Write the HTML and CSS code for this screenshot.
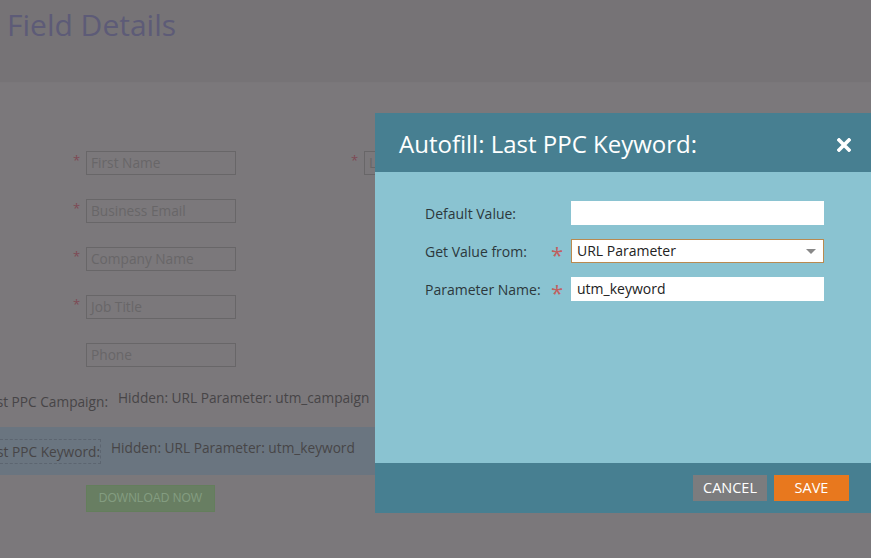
FILE: index.html
```html
<!DOCTYPE html>
<html lang="en">

<head>
    <meta charset="UTF-8">
    <title>Field Details</title>
    <link rel="stylesheet" href="styles.css">
</head>

<body>
    <div class="page">
        <div class="page-head">
            <h1>Field Details</h1>
        </div>

        <div class="form">
            <div class="row">
                <div class="col">
                    <span class="req">*</span>
                    <div class="box">First Name</div>
                </div>
                <div class="col col2">
                    <span class="req">*</span>
                    <div class="box">Last Name</div>
                </div>
            </div>
            <div class="row">
                <div class="col">
                    <span class="req">*</span>
                    <div class="box">Business Email</div>
                </div>
            </div>
            <div class="row">
                <div class="col">
                    <span class="req">*</span>
                    <div class="box">Company Name</div>
                </div>
            </div>
            <div class="row">
                <div class="col">
                    <span class="req">*</span>
                    <div class="box">Job Title</div>
                </div>
            </div>
            <div class="row">
                <div class="col">
                    <span class="req"></span>
                    <div class="box">Phone</div>
                </div>
            </div>
        </div>

        <div class="hidden-row">
            <div class="hlabel"><span>Last PPC Campaign:</span></div>
            <div class="hval">Hidden: URL Parameter: utm_campaign</div>
        </div>
        <div class="hidden-row sel">
            <div class="hlabel"><span>Last PPC Keyword:</span></div>
            <div class="hval">Hidden: URL Parameter: utm_keyword</div>
        </div>

        <div class="submit-wrap">
            <div class="dl-btn">DOWNLOAD NOW</div>
        </div>
    </div>

    <div class="modal">
        <div class="modal-head">
            <span class="modal-title">Autofill: Last PPC Keyword:</span>
            <svg class="close" width="14" height="14" viewBox="0 0 14 14">
                <path d="M2 2 L12 12 M12 2 L2 12" stroke="#fff" stroke-width="3.6" stroke-linecap="square" />
            </svg>
        </div>
        <div class="modal-body">
            <div class="field">
                <label>Default Value:</label>
                <span class="star"></span>
                <div class="inp"></div>
            </div>
            <div class="field">
                <label>Get Value from:</label>
                <span class="star">*</span>
                <div class="inp select">URL Parameter
                    <span class="caret"></span>
                </div>
            </div>
            <div class="field">
                <label>Parameter Name:</label>
                <span class="star">*</span>
                <div class="inp">utm_keyword</div>
            </div>
        </div>
        <div class="modal-foot">
            <div class="btn cancel">CANCEL</div>
            <div class="btn save">SAVE</div>
        </div>
    </div>
</body>

</html>
```

FILE: styles.css
```css
* {
    margin: 0;
    padding: 0;
    box-sizing: border-box;
}

body {
    width: 871px;
    height: 558px;
    overflow: hidden;
    background-color: #7b787b;
    font-family: "Open Sans", "Liberation Sans", sans-serif;
}

.page-head {
    height: 83px;
    padding: 4px 0 0 7px;
    background-color: #767376;
    border-bottom: 1px solid #7a777a;
}

.page-head h1 {
    font-size: 30px;
    font-weight: normal;
    line-height: 42px;
    color: #5d5b77;
}

.form {
    padding-top: 68px;
}

.form .row {
    display: flex;
    height: 48px;
}

.form .col {
    display: flex;
    align-items: flex-start;
}

.form .col2 {
    margin-left: 115px;
}

.form .req {
    width: 13px;
    margin-left: 73px;
    color: #7e4a55;
    font-size: 13px;
    line-height: 18px;
}

.form .col2 .req {
    margin-left: 0;
}

.form .box {
    width: 150px;
    height: 24px;
    padding-left: 4px;
    border: 1px solid #686668;
    font-size: 13.7px;
    line-height: 22px;
    color: #686668;
}

.hidden-row {
    display: flex;
    height: 36px;
    font-size: 13.7px;
    line-height: 18px;
    color: #474547;
}

.hidden-row .hlabel {
    display: flex;
    justify-content: flex-end;
    width: 108px;
    flex-shrink: 0;
    padding-top: 2px;
    overflow: hidden;
    white-space: nowrap;
}

.hidden-row .hlabel span {
    flex-shrink: 0;
}

.hidden-row .hval {
    margin-left: 10px;
    margin-top: -2px;
    white-space: nowrap;
}

.hidden-row.sel {
    height: 48px;
    padding-top: 12px;
    background-color: #6a7580;
}

.hidden-row.sel .hlabel {
    width: 101px;
    height: 25px;
    padding-top: 3px;
    border: 1px dashed #5c6570;
    border-left: none;
}

.hidden-row.sel .hval {
    margin-left: 10px;
    margin-top: 0;
}

.submit-wrap {
    padding: 10px 0 0 86px;
}

.dl-btn {
    width: 129px;
    height: 27px;
    background-color: #687e62;
    border: 1px solid #647e5c;
    color: #839c80;
    font-family: "Liberation Sans", sans-serif;
    font-size: 12px;
    line-height: 25px;
    text-align: center;
}

.modal {
    position: absolute;
    left: 375px;
    top: 113px;
    width: 500px;
    height: 400px;
    display: flex;
    flex-direction: column;
    background-color: #8ac3d1;
}

.modal-head {
    height: 59px;
    display: flex;
    justify-content: space-between;
    align-items: center;
    padding: 0 24px 0 24px;
    background-color: #477f91;
}

.modal-title {
    font-size: 24px;
    color: #fff;
    margin-top: 2px;
}

.close {
    margin-top: 4px;
    margin-right: 0;
}

.modal-body {
    flex: 1;
    padding: 29px 0 0 50px;
}

.field {
    display: flex;
    align-items: center;
    height: 24px;
    margin-bottom: 14px;
}

.field label {
    width: 126px;
    font-size: 14px;
    color: #2c383c;
}

.field .star {
    width: 20px;
    color: #c1605f;
    font-size: 22px;
    line-height: 24px;
    padding-top: 6px;
}

.field .inp {
    position: relative;
    width: 253px;
    height: 24px;
    padding-left: 6px;
    background-color: #fff;
    font-size: 14px;
    line-height: 24px;
    color: #222;
}

.field .select {
    border: 1px solid #b98a50;
    line-height: 22px;
    padding-left: 5px;
}

.caret {
    position: absolute;
    right: 7px;
    top: 9px;
    border-left: 5px solid transparent;
    border-right: 5px solid transparent;
    border-top: 5px solid #888;
}

.modal-foot {
    height: 50px;
    display: flex;
    justify-content: flex-end;
    align-items: center;
    gap: 7px;
    padding-right: 26px;
    background-color: #477f91;
}

.btn {
    height: 26px;
    font-size: 14.5px;
    line-height: 26px;
    text-align: center;
    color: #fff;
}

.btn.cancel {
    width: 74px;
    background-color: #7c7c7e;
}

.btn.save {
    width: 75px;
    background-color: #e8781e;
}
```
